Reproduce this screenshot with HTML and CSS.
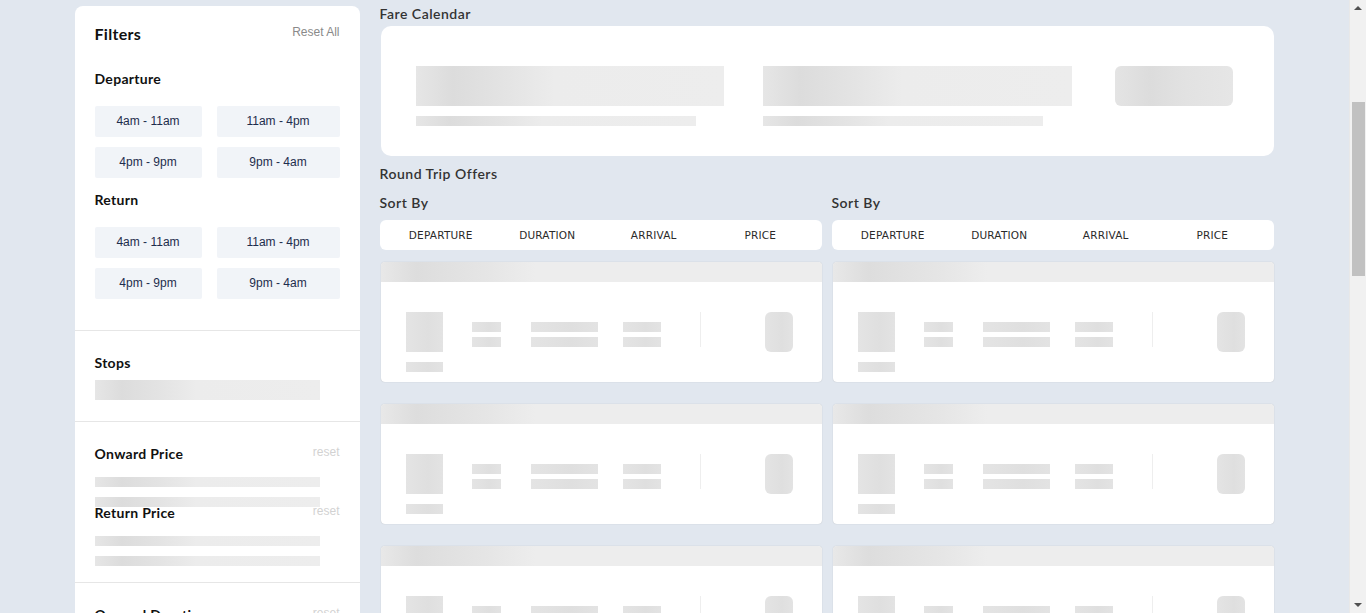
FILE: index.html
```html
<!DOCTYPE html>
<html lang="en">
<head>
  <meta charset="UTF-8"/>
  <meta name="viewport" content="width=device-width, initial-scale=1.0"/>
  <title>Round Trip Offers</title>
  <link rel="stylesheet" href="styles.css">
</head>
<body>
<div class="page">
  <aside class="filters">
    <section class="filter-block">
      <div class="filter-head">
        <h3 class="title">Filters</h3>
        <span class="reset-all">Reset All</span>
      </div>

      <h4>Departure</h4>
      <div class="chips">
        <span class="chip">4am - 11am</span>
        <span class="chip">11am - 4pm</span>
        <span class="chip">4pm - 9pm</span>
        <span class="chip">9pm - 4am</span>
      </div>

      <h4>Return</h4>
      <div class="chips">
        <span class="chip">4am - 11am</span>
        <span class="chip">11am - 4pm</span>
        <span class="chip">4pm - 9pm</span>
        <span class="chip">9pm - 4am</span>
      </div>
    </section>

    <section class="filter-block stops">
      <h4>Stops</h4>
      <div class="skel stop-bar"></div>
    </section>

    <section class="filter-block prices">
      <div class="filter-head">
        <h4>Onward Price</h4>
        <span class="reset">reset</span>
      </div>
      <div class="skel line"></div>
      <div class="skel line"></div>
      <div class="filter-head overlap">
        <h4>Return Price</h4>
        <span class="reset">reset</span>
      </div>
      <div class="skel line"></div>
      <div class="skel line"></div>
    </section>

    <section class="filter-block prices">
      <div class="filter-head">
        <h4>Onward Duration</h4>
        <span class="reset">reset</span>
      </div>
      <div class="skel line"></div>
      <div class="skel line"></div>
      <div class="filter-head overlap">
        <h4>Return Duration</h4>
        <span class="reset">reset</span>
      </div>
      <div class="skel line"></div>
      <div class="skel line"></div>
    </section>
  </aside>

  <main>
    <h2>Fare Calendar</h2>
    <div class="calendar">
      <div class="cal-item">
        <div class="skel cal-big"></div>
        <div class="skel cal-small"></div>
      </div>
      <div class="cal-item">
        <div class="skel cal-big"></div>
        <div class="skel cal-small"></div>
      </div>
      <div class="skel cal-btn"></div>
    </div>

    <h2>Round Trip Offers</h2>
    <div class="offers">
      <div class="offer-col" id="onward"></div>
      <div class="offer-col" id="return"></div>
    </div>
  </main>
</div>

<!-- browser scrollbar look-alike -->
<div class="scrollbar">
  <span class="arrow up"></span>
  <span class="thumb"></span>
  <span class="arrow down"></span>
</div>

<template id="cardTpl">
  <div class="flight-card">
    <div class="skel card-top"></div>
    <div class="card-body">
      <div class="airline">
        <div class="block logo"></div>
        <div class="block name"></div>
      </div>
      <div class="pair short">
        <div class="block"></div>
        <div class="block"></div>
      </div>
      <div class="pair wide">
        <div class="block"></div>
        <div class="block"></div>
      </div>
      <div class="pair mid">
        <div class="block"></div>
        <div class="block"></div>
      </div>
      <div class="divider"></div>
      <div class="block price-box"></div>
    </div>
  </div>
</template>

<script>
  const sortLabels = ["Departure", "Duration", "Arrival", "Price"];
  const tpl = document.getElementById("cardTpl");

  ["onward", "return"].forEach(id => {
    const col = document.getElementById(id);
    col.innerHTML = `
      <h5>Sort By</h5>
      <div class="sort-bar">
        ${sortLabels.map(l => `<span>${l}</span>`).join("")}
      </div>
    `;
    for (let i = 0; i < 4; i++) {
      col.appendChild(tpl.content.cloneNode(true));
    }
  });
</script>
</body>
</html>
```

FILE: styles.css
```css
body {
  background-color: #e1e7ef;
  margin: 0;
  padding: 0 17px 0 0;
  font-family: Lato, "Noto Sans", sans-serif;
  color: #222;
}

.page {
  width: 1200px;
  margin: 0 auto;
  padding-top: 6px;
  display: flex;
  gap: 20px;
  align-items: flex-start;
}

/* ---------- fake scrollbar ---------- */

.scrollbar {
  position: fixed;
  top: 0;
  right: 0;
  width: 17px;
  height: 100vh;
  background: #f1f1f1;
  border-left: 1px solid #e8e8e8;
  box-sizing: border-box;
}

.thumb {
  position: absolute;
  left: 2px;
  top: 102px;
  width: 13px;
  height: 174px;
  background: #c1c1c1;
}

.arrow {
  position: absolute;
  left: 4px;
  width: 0;
  height: 0;
  border-left: 4px solid transparent;
  border-right: 4px solid transparent;
}

.arrow.up {
  top: 6px;
  border-bottom: 4px solid #505050;
}

.arrow.down {
  bottom: 6px;
  border-top: 4px solid #505050;
}

/* ---------- sidebar ---------- */

.filters {
  width: 285px;
  flex-shrink: 0;
  background: #fff;
  border-radius: 8px 8px 0 0;
}

.filter-block {
  padding: 0 20px;
  border-bottom: 1px solid #e6e6e6;
}

.filter-head {
  display: flex;
  justify-content: space-between;
  align-items: flex-start;
}

.title {
  margin: 18px 0 0;
  font-size: 16px;
  font-weight: 700;
  letter-spacing: 0.3px;
  color: #111;
}

.reset-all {
  margin-top: 19px;
  font-family: "Liberation Sans", Arial, sans-serif;
  font-size: 12px;
  color: #8a8a8a;
}

.filter-block h4 {
  margin: 0;
  font-size: 14px;
  font-weight: 700;
  letter-spacing: 0.3px;
  color: #111;
}

.filter-head + h4 {
  margin-top: 27px;
}

.chips {
  display: grid;
  grid-template-columns: 107px 123px;
  column-gap: 15px;
  row-gap: 10px;
  margin: 19px 0 0;
}

.chips + h4 {
  margin-top: 13px;
}

.chips:last-child {
  margin-bottom: 31px;
}

.chip {
  height: 31px;
  line-height: 31px;
  text-align: center;
  background: #f1f4f8;
  border-radius: 2px;
  font-family: "Liberation Sans", Arial, sans-serif;
  font-size: 12px;
  color: #1e2d4d;
}

.stops {
  padding-top: 23px;
  padding-bottom: 21px;
}

.stop-bar {
  width: 225px;
  height: 20px;
  margin-top: 9px;
}

.prices {
  padding-top: 23px;
  padding-bottom: 16px;
}

.reset {
  font-family: "Liberation Sans", Arial, sans-serif;
  font-size: 12px;
  color: #d2d2d2;
}

.line {
  width: 225px;
  height: 10px;
  margin-top: 10px;
}

.filter-head + .line {
  margin-top: 15px;
}

.filter-head.overlap {
  margin-top: -3px;
}

/* ---------- skeleton ---------- */

.skel {
  background: linear-gradient(90deg, #e6e6e6 0%, #dcdcdc 12%, #e4e4e4 30%, #ececec 45%, #ededed 100%);
}

.block {
  background: linear-gradient(90deg, #e4e4e4, #dfdfdf 60%, #e3e3e3);
}

/* ---------- main ---------- */

main {
  flex: 1;
  min-width: 0;
}

main h2 {
  margin: 0 0 4px;
  font-size: 14px;
  font-weight: 600;
  letter-spacing: 0.5px;
  color: #333;
  line-height: 16px;
}

.calendar {
  margin-left: 1px;
  width: 893px;
  height: 130px;
  background: #fff;
  border-radius: 10px;
  padding: 40px 41px 0 35px;
  box-sizing: border-box;
  display: flex;
  align-items: flex-start;
  margin-bottom: 10px;
}

.cal-item {
  width: 308px;
  margin-right: 39px;
}

.cal-item:nth-child(2) {
  width: 309px;
  margin-right: 43px;
}

.cal-big {
  height: 40px;
}

.cal-small {
  width: 280px;
  height: 10px;
  margin-top: 10px;
}

.cal-btn {
  width: 118px;
  height: 40px;
  border-radius: 6px;
  background: linear-gradient(90deg, #e4e4e4 0%, #dcdcdc 30%, #e2e2e2 60%, #e6e6e6 100%);
}

.offers {
  display: flex;
  gap: 10px;
}

.offer-col {
  width: 442px;
}

.offer-col h5 {
  margin: 9px 0 9px;
  font-size: 14px;
  font-weight: 600;
  letter-spacing: 0.5px;
  color: #333;
  line-height: 16px;
}

.sort-bar {
  height: 30px;
  background: #fff;
  border-radius: 6px;
  display: grid;
  grid-template-columns: repeat(4, 1fr);
  align-items: center;
  padding: 0 8px 0 8px;
  margin-bottom: 12px;
}

.sort-bar span {
  text-align: center;
  font-family: "DejaVu Sans", Verdana, sans-serif;
  font-size: 10.5px;
  text-transform: uppercase;
  color: #2a2a2a;
  letter-spacing: 0.2px;
}

/* ---------- flight cards ---------- */

.flight-card {
  margin-left: 1px;
  background: #fff;
  border-radius: 4px;
  overflow: hidden;
  height: 120px;
  box-shadow: 0 0 1px rgba(0, 0, 0, 0.25);
  margin-bottom: 22px;
}

.card-top {
  height: 20px;
  background: linear-gradient(90deg, #e8e8e8 0%, #dddddd 8%, #e6e6e6 25%, #ededed 35%, #ededed 100%);
}

.card-body {
  display: flex;
  align-items: flex-start;
  padding: 30px 29px 0 25px;
}

.airline {
  width: 37px;
}

.logo {
  height: 40px;
}

.name {
  height: 10px;
  margin-top: 10px;
}

.pair {
  margin-top: 10px;
  display: flex;
  flex-direction: column;
  gap: 5px;
}

.pair .block {
  height: 10px;
}

.short {
  width: 29px;
  margin-left: 29px;
}

.wide {
  width: 67px;
  margin-left: 30px;
}

.mid {
  width: 38px;
  margin-left: 25px;
}

.divider {
  width: 1px;
  height: 35px;
  background: #eeeeee;
  margin-left: 39px;
}

.price-box {
  margin-left: auto;
  width: 28px;
  height: 40px;
  border-radius: 6px;
}
```
